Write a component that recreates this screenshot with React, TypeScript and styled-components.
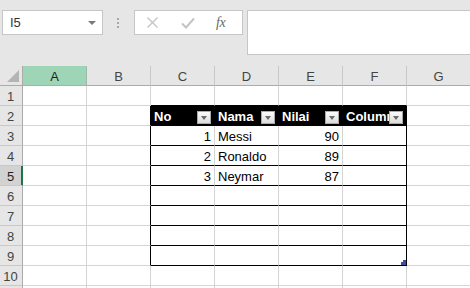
import React from "react";
import styled, { createGlobalStyle } from "styled-components";

const Global = createGlobalStyle`
  html, body { margin: 0; padding: 0; background: #e6e6e6; }
  body { font-family: "Liberation Sans", Arial, sans-serif; overflow: hidden; }
  * { box-sizing: border-box; }
`;

const Page = styled.div`
  width: 470px;
  height: 288px;
  overflow: hidden;
  background: #e6e6e6;
`;

const Toolbar = styled.div`
  height: 66px;
  display: flex;
  align-items: flex-start;
  padding: 10px 0 0 2px;
`;

const NameBox = styled.div`
  width: 101px;
  height: 25px;
  background: #fff;
  border: 1px solid #c6c6c6;
  display: flex;
  align-items: center;
  justify-content: space-between;
  padding: 0 6px 0 7px;
  font-size: 13px;
  color: #333;
`;

const Caret = styled.span`
  width: 0;
  height: 0;
  border-left: 4px solid transparent;
  border-right: 4px solid transparent;
  border-top: 4px solid #7a7a7a;
`;

const Grip = styled.div`
  width: 31px;
  height: 25px;
  display: flex;
  flex-direction: column;
  align-items: center;
  justify-content: center;
  gap: 2px;
  padding-right: 1px;
`;

const Dot = styled.span`
  width: 2px;
  height: 2px;
  background: #a8a8a8;
`;

const ButtonsBox = styled.div`
  width: 109px;
  height: 25px;
  background: #fff;
  border: 1px solid #c6c6c6;
  display: flex;
  align-items: center;
  padding-left: 11px;
  gap: 22px;
`;

const FxText = styled.span`
  font-family: "Liberation Serif", "Times New Roman", serif;
  font-style: italic;
  font-size: 14px;
  color: #6a6a6a;
  letter-spacing: -0.5px;
  margin-left: -1px;
`;

const FormulaInput = styled.div`
  flex: 1;
  margin-left: 4px;
  height: 45px;
  background: #fff;
  border: 1px solid #c6c6c6;
  border-right: none;
`;

const Sheet = styled.div`
  display: grid;
  grid-template-columns: 23px repeat(7, 64px);
  grid-auto-rows: 20px;
  background: #fff;
`;

const Corner = styled.div`
  background: #e6e6e6;
  border-right: 1px solid #ababab;
  border-bottom: 1px solid #ababab;
  position: relative;
`;

const ColHead = styled.div<{ $sel?: boolean }>`
  background: ${(p) => (p.$sel ? "#9fd5b7" : "#e6e6e6")};
  border-right: 1px solid ${(p) => (p.$sel ? "#9fb8aa" : "#c8c8c8")};
  border-bottom: 1px solid #ababab;
  display: flex;
  align-items: center;
  justify-content: center;
  font-size: 13px;
  color: ${(p) => (p.$sel ? "#1e1e1e" : "#444")};
  padding-top: 1px;
`;

const RowHead = styled.div<{ $sel?: boolean }>`
  background: ${(p) => (p.$sel ? "#d2d2d2" : "#e6e6e6")};
  border-right: 1px solid ${(p) => (p.$sel ? "#217346" : "#ababab")};
  box-shadow: ${(p) => (p.$sel ? "inset -1px 0 #217346" : "none")};
  border-bottom: 1px solid #c8c8c8;
  display: flex;
  align-items: center;
  justify-content: center;
  font-size: 13px;
  color: ${(p) => (p.$sel ? "#1e1e1e" : "#444")};
  padding-top: 1px;
  padding-right: 1px;
`;

const Cell = styled.div<{
  $right: string;
  $bottom: string;
  $head?: boolean;
  $align?: "left" | "right";
}>`
  position: relative;
  background: ${(p) => (p.$head ? "#000" : "#fff")};
  color: ${(p) => (p.$head ? "#fff" : "#000")};
  font-weight: ${(p) => (p.$head ? 700 : 400)};
  border-right: 1px solid ${(p) => p.$right};
  border-bottom: 1px solid ${(p) => p.$bottom};
  font-size: 13px;
  display: flex;
  align-items: center;
  justify-content: ${(p) => (p.$align === "right" ? "flex-end" : "flex-start")};
  padding: 2px 3px 0 3px;
  white-space: nowrap;
  overflow: hidden;
`;

const FilterBtn = styled.span`
  position: absolute;
  right: 3px;
  top: 5px;
  width: 14px;
  height: 13px;
  border: 1px solid #a9a9a9;
  background: linear-gradient(#fbfbfb, #dcdcdc);
  display: flex;
  align-items: center;
  justify-content: center;
  &::after {
    content: "";
    width: 0;
    height: 0;
    border-left: 3.5px solid transparent;
    border-right: 3.5px solid transparent;
    border-top: 4px solid #6a6a6a;
  }
`;

const Handle = styled.svg`
  position: absolute;
  right: 0;
  bottom: 0;
`;

const CornerTri = styled.svg`
  position: absolute;
  left: 7px;
  top: 4px;
`;

const cols = ["A", "B", "C", "D", "E", "F", "G"];

type Val = { t: string; align?: "left" | "right" };
const data: Record<number, Record<string, Val>> = {
  2: { C: { t: "No" }, D: { t: "Nama" }, E: { t: "Nilai" }, F: { t: "Column1" } },
  3: { C: { t: "1", align: "right" }, D: { t: "Messi" }, E: { t: "90", align: "right" } },
  4: { C: { t: "2", align: "right" }, D: { t: "Ronaldo" }, E: { t: "89", align: "right" } },
  5: { C: { t: "3", align: "right" }, D: { t: "Neymar" }, E: { t: "87", align: "right" } },
};

const GRID = "#d4d4d4";
const BLACK = "#000";

export default function App() {
  const rows = Array.from({ length: 11 }, (_, i) => i + 1);
  return (
    <Page>
      <Global />
      <Toolbar>
        <NameBox>
          <span>I5</span>
          <Caret />
        </NameBox>
        <Grip>
          <Dot />
          <Dot />
          <Dot />
        </Grip>
        <ButtonsBox>
          <svg width="13" height="13" viewBox="0 0 13 13">
            <path d="M1.5 1.5 L11.5 11.5 M11.5 1.5 L1.5 11.5" stroke="#c4c4c4" strokeWidth="1.4" fill="none" />
          </svg>
          <svg width="14" height="12" viewBox="0 0 14 12">
            <path d="M1 6.5 L5 10.5 L13 1.5" stroke="#c4c4c4" strokeWidth="2" fill="none" />
          </svg>
          <FxText>fx</FxText>
        </ButtonsBox>
        <FormulaInput />
      </Toolbar>
      <Sheet>
        <Corner>
          <CornerTri width="12" height="12" viewBox="0 0 12 12">
            <polygon points="12,0 12,12 0,12" fill="#b4b4b4" />
          </CornerTri>
        </Corner>
        {cols.map((c) => (
          <ColHead key={c} $sel={c === "A"}>
            {c}
          </ColHead>
        ))}
        {rows.map((r) => (
          <React.Fragment key={r}>
            <RowHead $sel={r === 5}>{r}</RowHead>
            {cols.map((c) => {
              const inTableRow = r >= 2 && r <= 9;
              const inTableCol = ["C", "D", "E", "F"].includes(c);
              const right = inTableRow && (c === "B" || c === "F") ? BLACK : GRID;
              const bottom = r >= 1 && r <= 9 && inTableCol ? BLACK : GRID;
              const v = data[r]?.[c];
              const head = r === 2 && inTableCol;
              return (
                <Cell
                  key={c}
                  $right={head && c !== "F" ? BLACK : right}
                  $bottom={bottom}
                  $head={head}
                  $align={v?.align}
                >
                  {v?.t}
                  {head && <FilterBtn />}
                  {r === 9 && c === "F" && (
                    <Handle width="5" height="5" viewBox="0 0 5 5">
                      <polygon points="2,0 5,0 5,5 0,5 0,2 2,2" fill="#3b4ea0" />
                    </Handle>
                  )}
                </Cell>
              );
            })}
          </React.Fragment>
        ))}
      </Sheet>
    </Page>
  );
}
